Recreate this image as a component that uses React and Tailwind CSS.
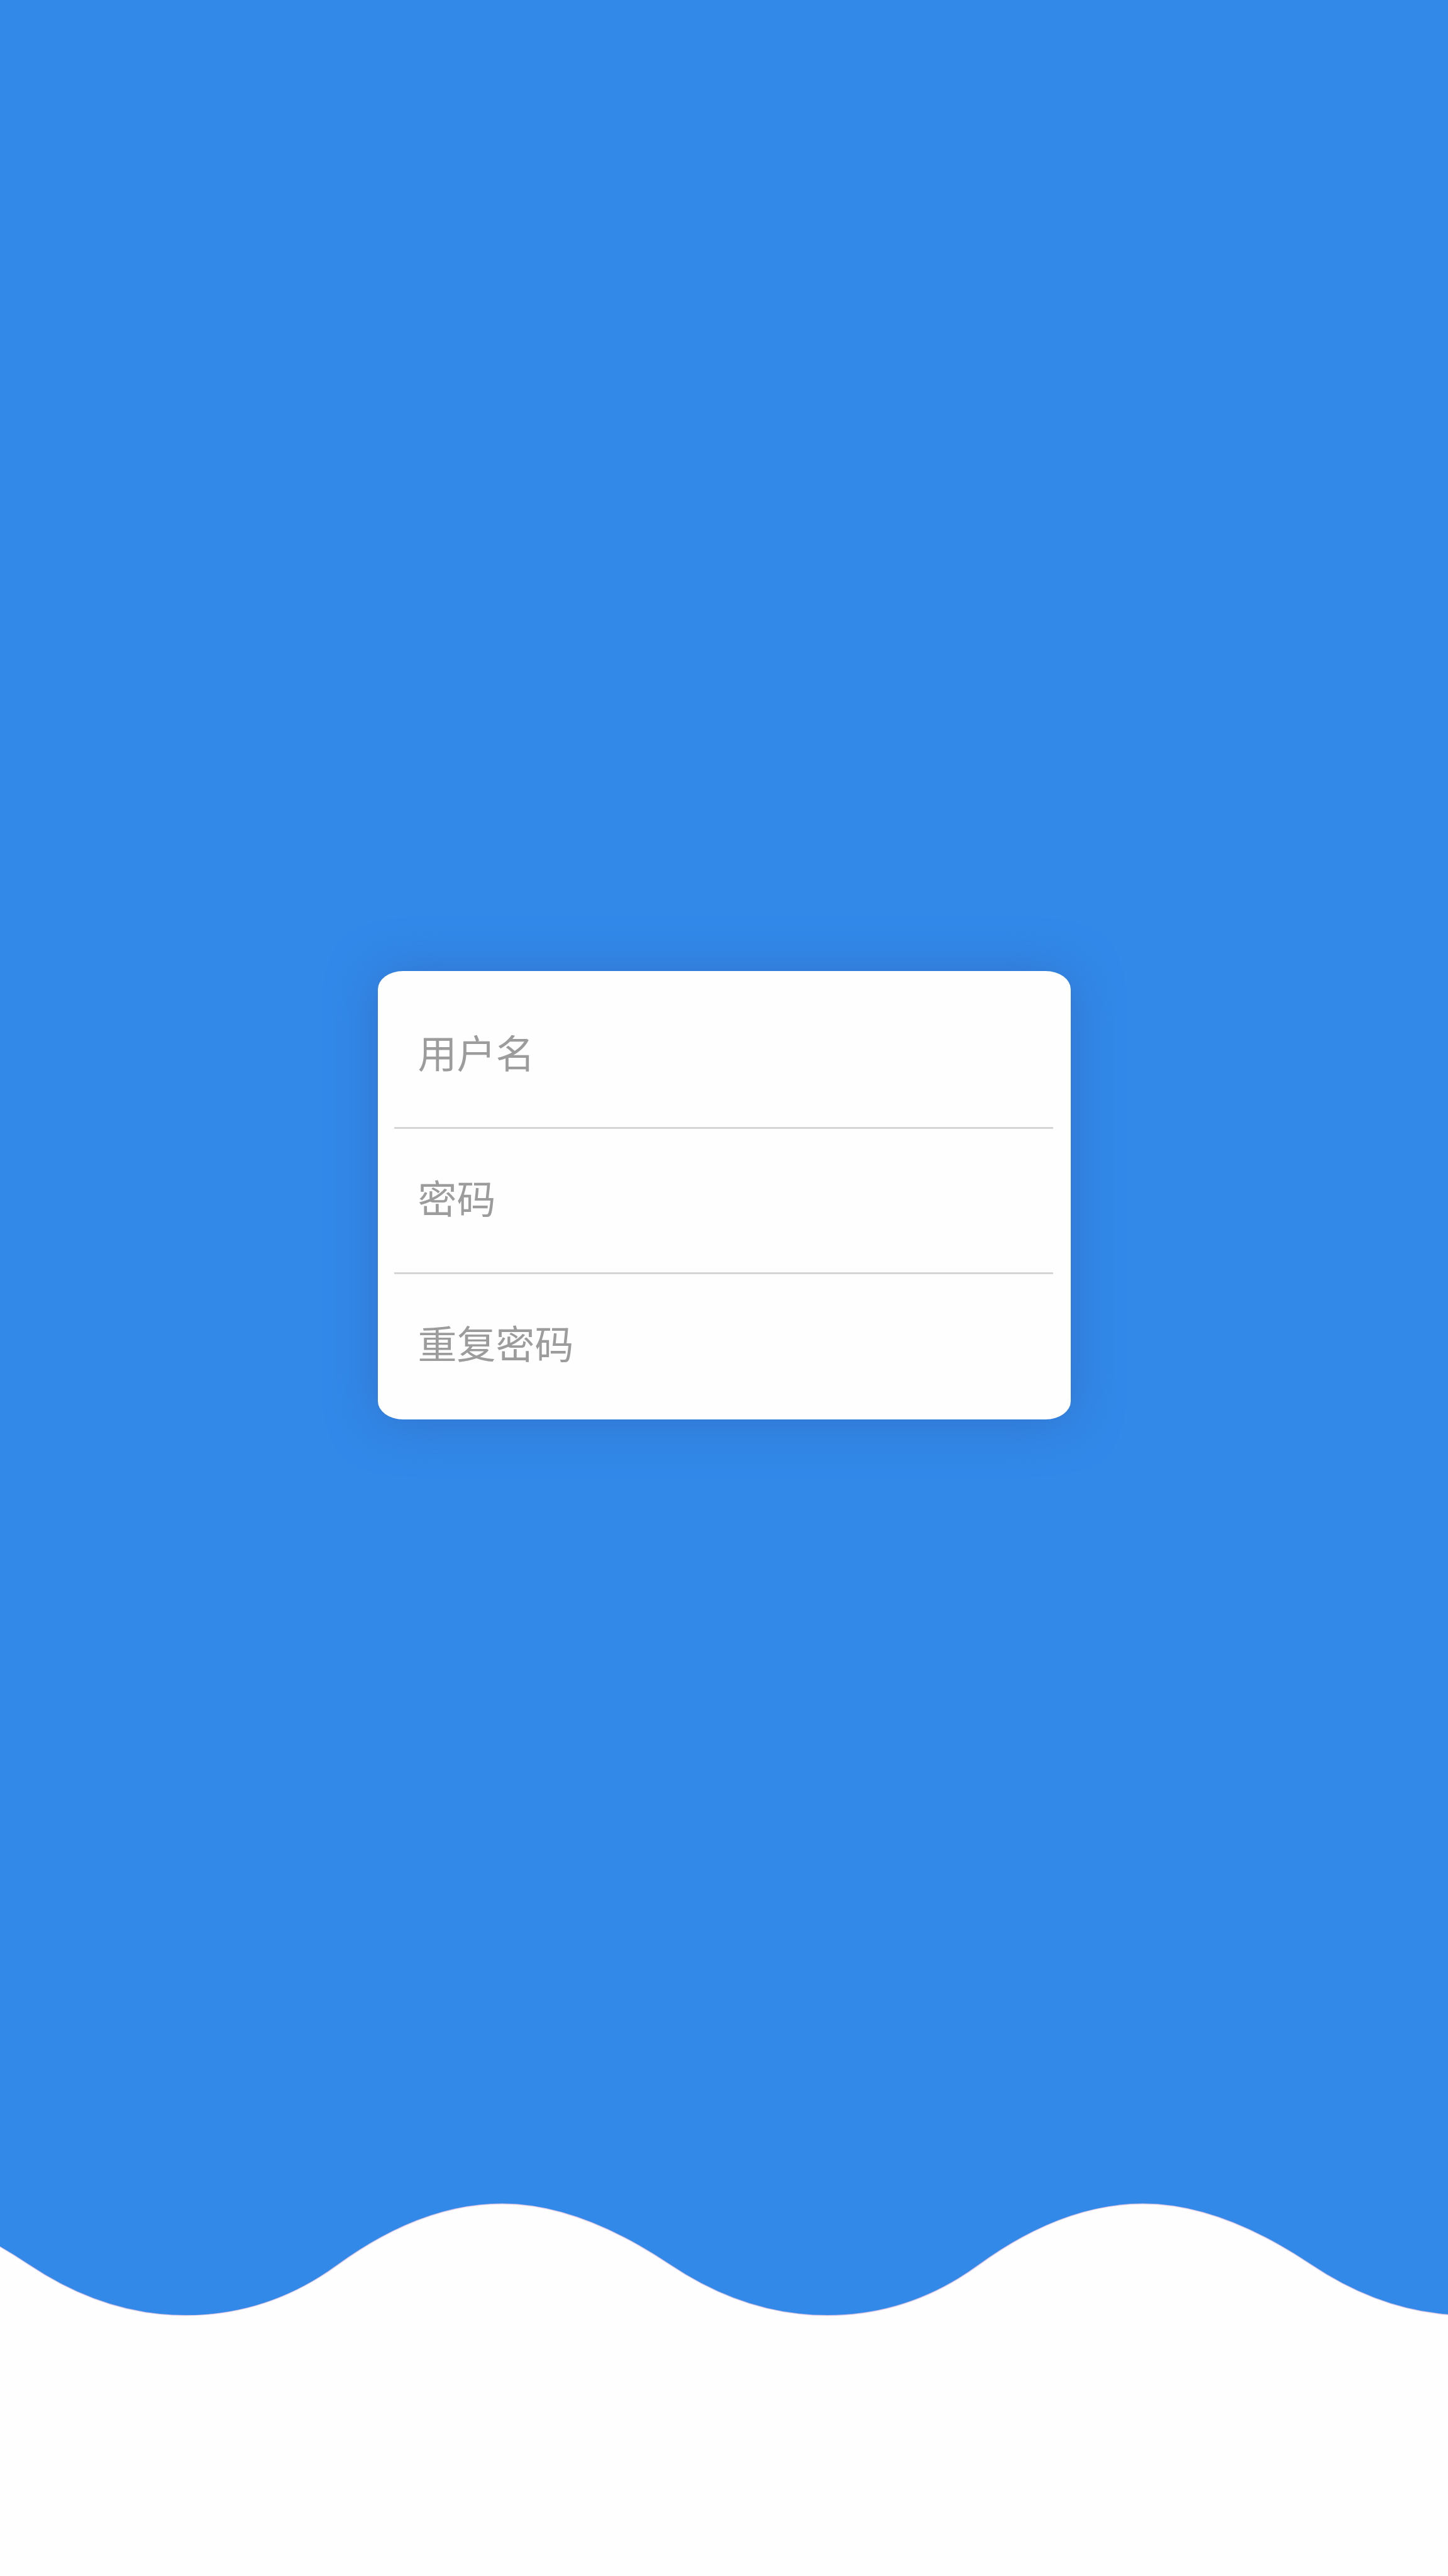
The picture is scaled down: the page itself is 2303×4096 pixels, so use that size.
const fields = [
  { id: "username", label: "用户名", type: "text", autoComplete: "username" },
  { id: "password", label: "密码", type: "password", autoComplete: "new-password" },
  { id: "confirm", label: "重复密码", type: "password", autoComplete: "new-password" },
];

const crest =
  "M-268 4244 Q-120 4244 55 4361 Q201 4459 357 4459 Q517 4459 650 4362 Q812 4244 967 4244 Q1115 4244 1290 4361 Q1436 4459 1593 4459 Q1752 4459 1885 4362 Q2047 4244 2202 4244 Q2350 4244 2525 4361 Q2671 4459 2828 4459";

function Field({ id, label, type, autoComplete }) {
  return (
    <div className="border-b-[3px] border-[#d5d5d5] last:border-b-0">
      <input
        id={id}
        name={id}
        type={type}
        autoComplete={autoComplete}
        placeholder={label}
        aria-label={label}
        className="block h-[228px] w-full bg-transparent px-[38px] pb-3 text-[62px] text-[#555555] outline-none placeholder:text-[#9c9c9c] placeholder:opacity-100"
      />
    </div>
  );
}

function Wave() {
  return (
    <svg viewBox="0 4240 2789 220" className="block h-auto w-full" aria-hidden="true">
      <path d={`${crest} V4470 H-268 Z`} fill="#fefefe" />
      <path d={crest} fill="none" stroke="#efcfe6" strokeWidth="2" strokeOpacity="0.7" />
    </svg>
  );
}

export default function App() {
  return (
    <div className="flex min-h-screen flex-col bg-[#3289e8] font-['Noto_Sans_CJK_SC',sans-serif]">
      <main className="flex flex-1 flex-col items-center justify-center pt-[300px]">
        <form className="w-[48%] max-w-[1102px] rounded-[40px/29px] bg-[#fefefe] pt-5 pr-7 pb-[3px] pl-[26px] shadow-[0_3px_76px_#3271cc]">
          {fields.map((field) => (
            <Field key={field.id} {...field} />
          ))}
        </form>
      </main>
      <Wave />
      <footer className="h-[413px] bg-[#fefefe]" />
    </div>
  );
}
